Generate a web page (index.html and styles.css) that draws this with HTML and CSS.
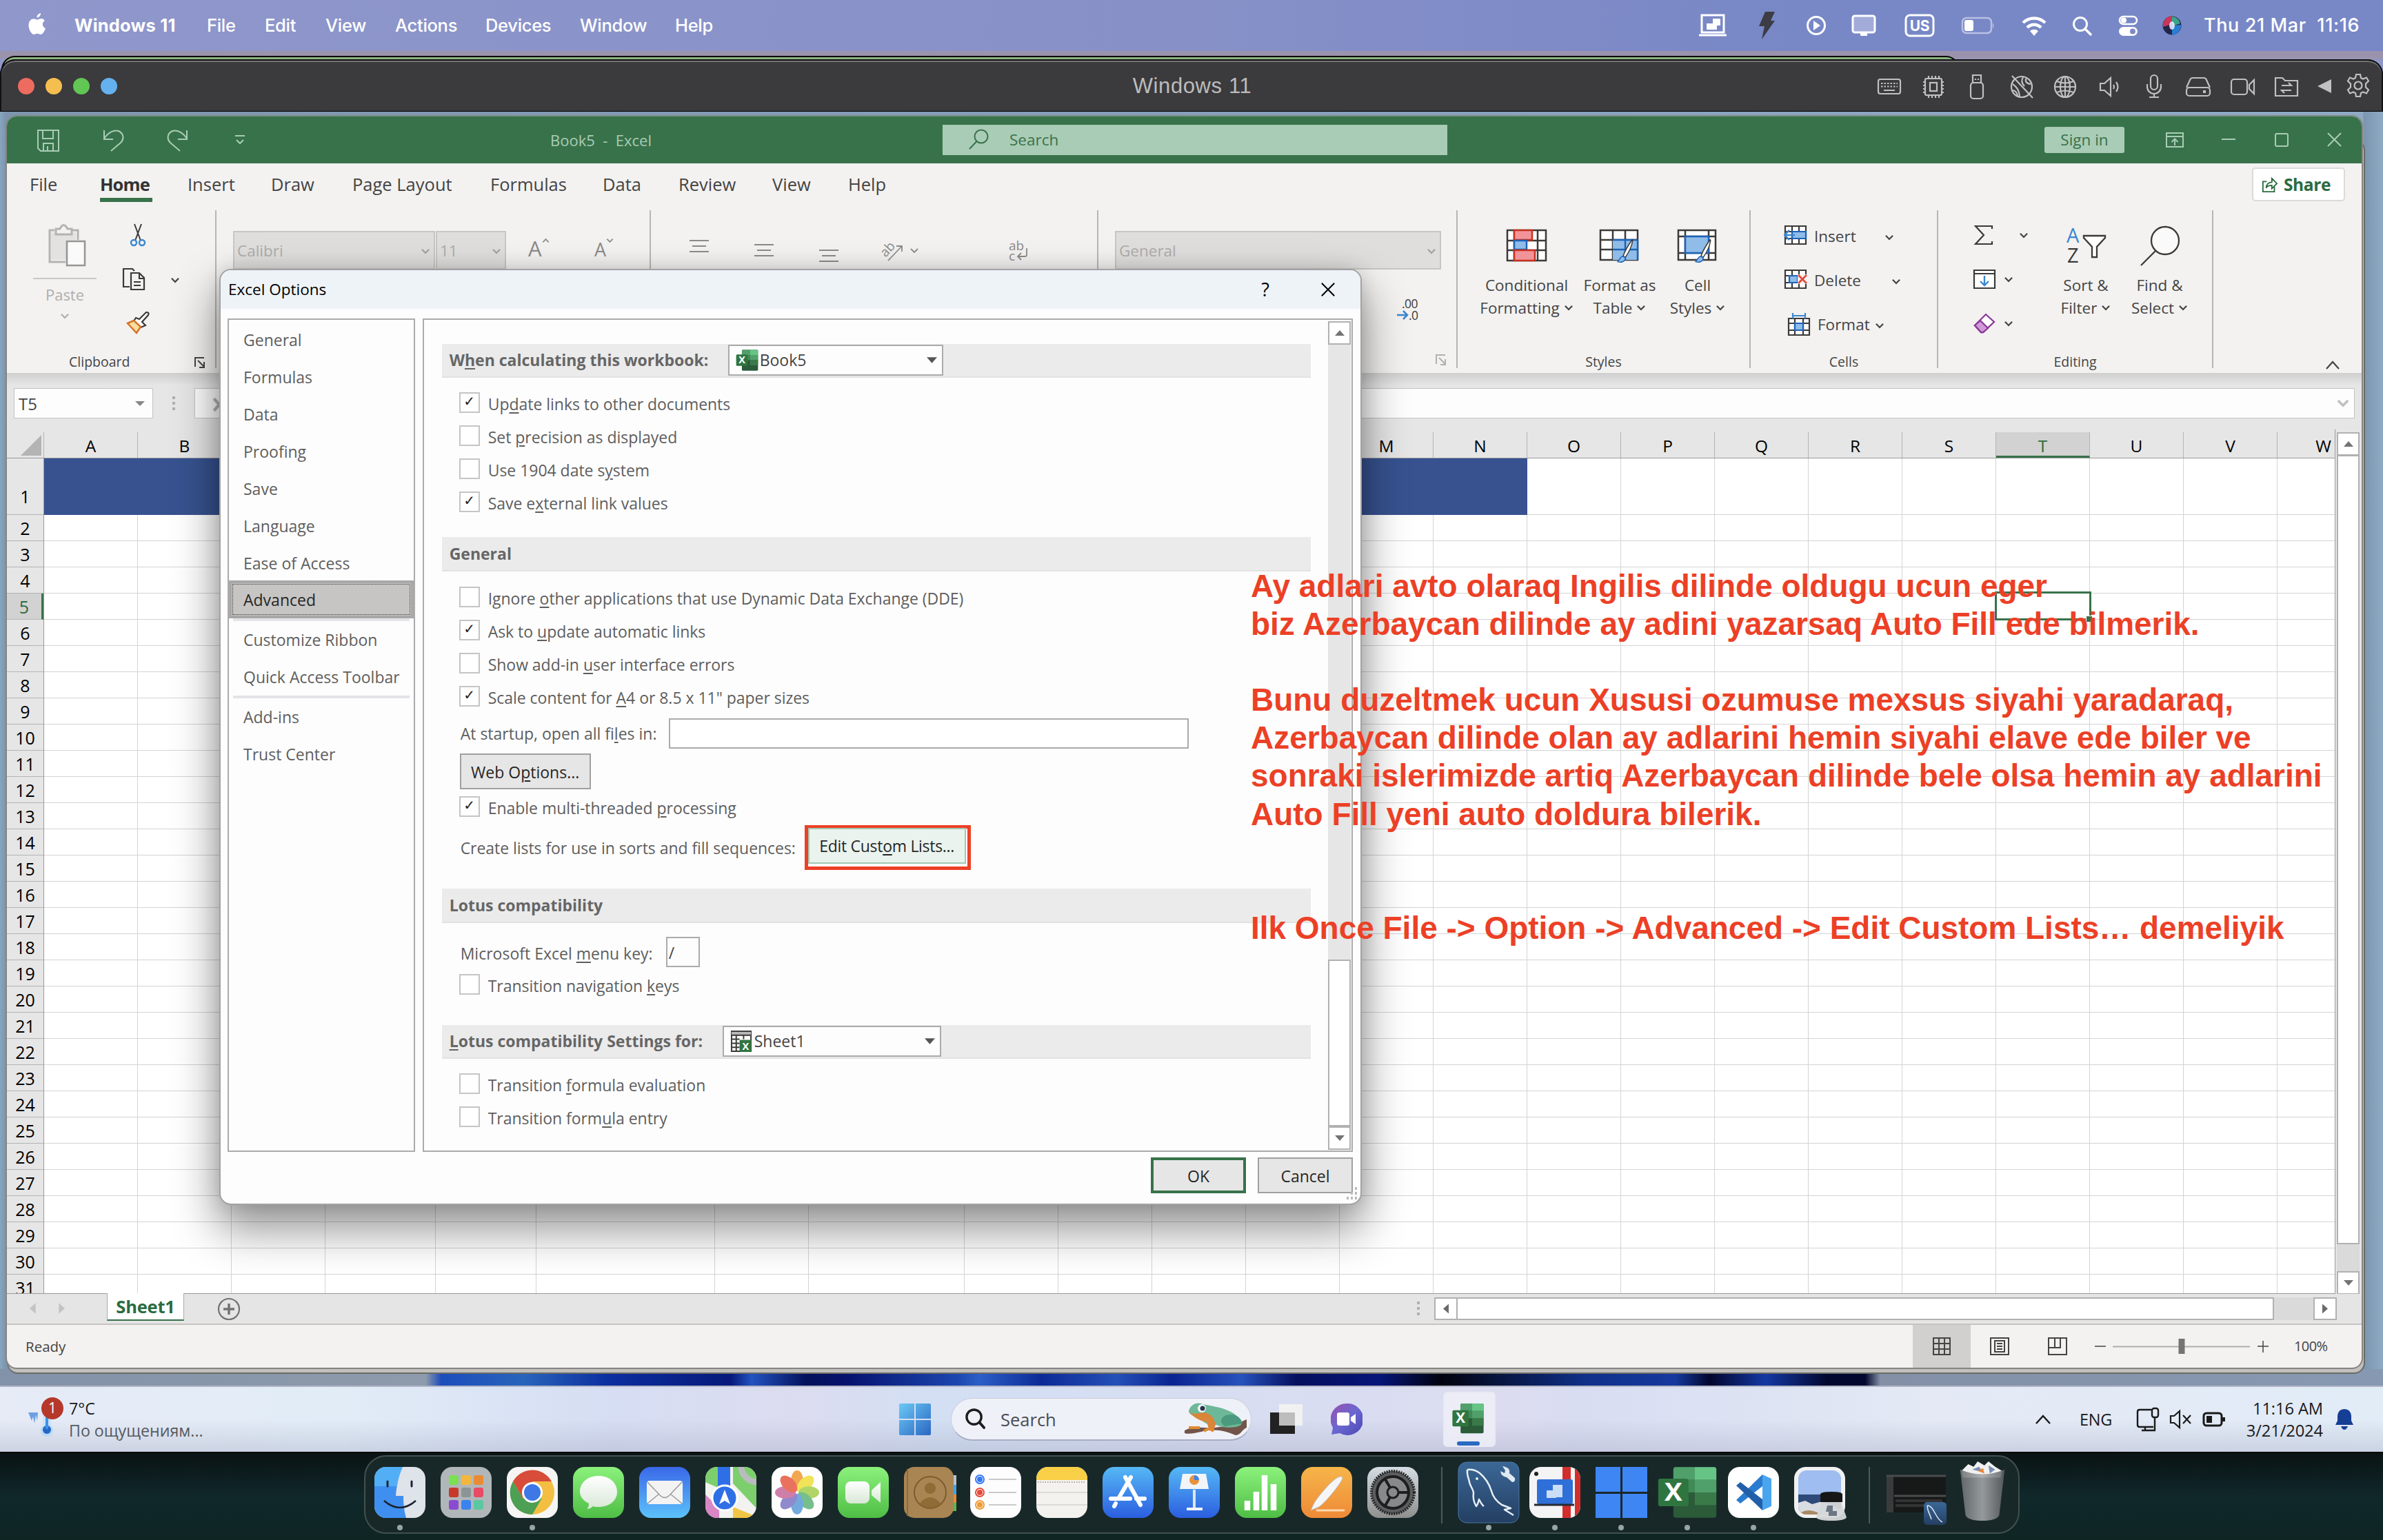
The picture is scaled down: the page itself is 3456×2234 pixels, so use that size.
FILE: index.html
```html
<!DOCTYPE html>
<html lang="en">
<head>
<meta charset="utf-8">
<title>Windows 11</title>
<link rel="stylesheet" href="styles.css">
</head>
<body>
<svg class="defs" aria-hidden="true">
  <defs>
    <symbol id="chev" viewBox="0 0 12 8"><path d="M1.5 1.5 6 6.2 10.500 1.500" fill="none" stroke="currentColor" stroke-width="2"/></symbol>
    <symbol id="excel" viewBox="0 0 48 48">
      <rect x="13" y="2" width="34" height="44" rx="2" fill="#2b5b39"/>
      <path d="M13 4a2 2 0 0 1 2-2h15v11H13z" fill="#50a06b"/><path d="M30 2h15a2 2 0 0 1 2 2v9H30z" fill="#67c487"/>
      <path d="M13 13h17v11H13z" fill="#3f8a57"/><path d="M30 13h17v11H30z" fill="#50a06b"/>
      <path d="M30 24h17v11H30z" fill="#3a7a49"/>
      <rect x="1" y="12" width="24" height="24" rx="2" fill="#2f7540"/>
      <text x="13" y="31" text-anchor="middle" class="logo-x">X</text>
    </symbol>
    <symbol id="brush" viewBox="0 0 40 70"><path d="M37 3C29 14 20 28 15 42l5 4C29 33 36 18 38 5z" fill="#fff" stroke="#3b3a39" stroke-width="2.500"/><path d="M14 43c-6 1-7 8-12 13 8 3 19 0 18-10z" fill="#8fbce8" stroke="#1e63b8" stroke-width="2.500"/></symbol>
    <linearGradient id="gGreen" x2="0" y2="1"><stop stop-color="#8bf27c"/><stop offset="1" stop-color="#4fbd45"/></linearGradient>
    <linearGradient id="gBlue" x2="0" y2="1"><stop stop-color="#3a68e8"/><stop offset="1" stop-color="#5cc2fb"/></linearGradient>
    <linearGradient id="gBlue2" x2="0" y2="1"><stop stop-color="#55b8f5"/><stop offset="1" stop-color="#2b5ee0"/></linearGradient>
    <linearGradient id="gOrange" x2="0" y2="1"><stop stop-color="#f6b54a"/><stop offset="1" stop-color="#ef8a37"/></linearGradient>
    <linearGradient id="gGray" x2="0" y2="1"><stop stop-color="#d5dde4"/><stop offset="1" stop-color="#8f8f8e"/></linearGradient>
    <linearGradient id="gWhite" x2="0" y2="1"><stop stop-color="#fff"/><stop offset="1" stop-color="#d8e8d6"/></linearGradient>
    <linearGradient id="gNavy" x2="0" y2="1"><stop stop-color="#3b6796"/><stop offset="1" stop-color="#243f63"/></linearGradient>
    <linearGradient id="gWin" x2="1" y2="1"><stop stop-color="#6cc8f5"/><stop offset="1" stop-color="#2a67c2"/></linearGradient>
    <linearGradient id="gChat" x2="1" y2="1"><stop stop-color="#9a4fb0"/><stop offset=".5" stop-color="#6a68d0"/><stop offset="1" stop-color="#4b46b4"/></linearGradient>
    <linearGradient id="gTrash"><stop stop-color="#6b6e70"/><stop offset=".5" stop-color="#a6a9ab"/><stop offset="1" stop-color="#5c5f61"/></linearGradient>
  </defs>
</svg>

<header class="menubar">
  <svg class="apple" viewBox="0 0 28 34"><path d="M19 1c.3 3-2.200 6.500-5.500 6.600C13.100 4.500 16 1.300 19 1zM24.800 12c-4.500 3-3.500 9.200 1.200 11-1.500 4.500-4.200 9-7 9-2 0-2.700-1.200-5-1.200S11 32 9.200 32C5.500 32 1.500 24.500 1.500 18.500c0-6 3.800-9.300 7.400-9.300 2.300 0 3.900 1.400 5.300 1.400 1.300 0 3.200-1.500 5.900-1.500 2 0 3.800 1.200 4.700 2.900z" fill="#fff"/></svg>
  <nav class="menus"><b>Windows 11</b><span>File</span><span>Edit</span><span>View</span><span>Actions</span><span>Devices</span><span>Window</span><span>Help</span></nav>
  <div class="status">
    <svg viewBox="0 0 44 44"><path d="M6 7h32v25H6zM2 36h40" fill="none" stroke="#fff" stroke-width="3"/><path d="M22 12h11v10h-5v6H13v-9h9z" fill="#fff"/></svg>
    <svg viewBox="0 0 44 44"><path d="M20 2h14l-6 13h6L15 42l4-19h-8z" fill="#3c3c44"/></svg>
    <svg viewBox="0 0 44 44"><circle cx="22" cy="22" r="12.500" fill="none" stroke="#fff" stroke-width="3"/><path d="M18 15l10 7-10 7z" fill="#fff"/></svg>
    <svg viewBox="0 0 44 44"><rect x="6" y="8" width="32" height="24" rx="3" fill="#a3abd8" stroke="#fff" stroke-width="3"/><path d="M17 33h10v4H17z" fill="#fff"/></svg>
    <svg viewBox="0 0 44 44"><rect x="2" y="7" width="40" height="30" rx="6" fill="none" stroke="#fff" stroke-width="3"/><text x="22" y="30" text-anchor="middle" class="us">US</text></svg>
    <svg viewBox="0 0 44 44"><rect x="-1" y="11" width="42" height="22" rx="6" fill="none" stroke="#b9c0e4" stroke-width="2.500"/><rect x="2" y="14" width="13" height="16" rx="3" fill="#fff"/><path d="M43 18v8q3-4 0-8" fill="#b9c0e4"/></svg>
    <svg viewBox="0 0 44 44"><path d="M6 18a23 23 0 0 1 32 0M12 25a14 14 0 0 1 20 0" fill="none" stroke="#fff" stroke-width="4.500"/><path d="M22 37l-6-7a9 9 0 0 1 12 0z" fill="#fff"/></svg>
    <svg viewBox="0 0 44 44"><circle cx="20" cy="20" r="9.500" fill="none" stroke="#fff" stroke-width="3"/><path d="M27 27l8 8" stroke="#fff" stroke-width="3.500" stroke-linecap="round"/></svg>
    <svg viewBox="0 0 44 44"><rect x="10" y="9" width="25" height="11" rx="5.500" fill="none" stroke="#fff" stroke-width="2.500"/><circle cx="16" cy="14.500" r="4" fill="#fff"/><rect x="9" y="24" width="27" height="13" rx="6.500" fill="#fff"/><circle cx="29" cy="30.500" r="4" fill="#7d8bc6"/></svg>
    <svg viewBox="0 0 44 44"><circle cx="22" cy="22" r="13.500" fill="#23264b"/><path d="M22 8a14 14 0 0 0-13 16l13-4z" fill="#c8365b"/><path d="M22 36a14 14 0 0 0 13-15l-13 1z" fill="#2b7dd1"/><path d="M22 9a13 13 0 0 1 12 10l-12 4z" fill="#39a58a"/><ellipse cx="22" cy="22" rx="4" ry="6" fill="#eef" opacity=".85"/></svg>
    <span class="clock">Thu 21 Mar&nbsp; 11:16</span>
  </div>
</header>

<div class="behind"></div>

<section class="vm">
  <div class="vm-title">
    <div class="lights"><i class="r"></i><i class="y"></i><i class="g"></i><i class="b"></i></div>
    <div class="vm-name">Windows 11</div>
    <div class="vm-icons">
      <svg viewBox="0 0 44 44"><rect x="6" y="11" width="32" height="21" rx="3"/><path d="M10 17h24M10 21.500h24" stroke-dasharray="2.500 2"/><path d="M14 27h16"/></svg>
      <svg viewBox="0 0 44 44"><rect x="10" y="10" width="24" height="24" rx="2"/><rect x="17" y="16" width="10" height="12"/><path d="M15 6v4M20 6v4M25 6v4M30 6v4M15 34v4M20 34v4M25 34v4M30 34v4M7 15h3M7 20h3M7 25h3M7 30h3M34 15h3M34 20h3M34 25h3M34 30h3"/></svg>
      <svg viewBox="0 0 44 44"><rect x="13" y="16" width="18" height="23" rx="4"/><path d="M16 16V5h12v11M20 10v2M24 10v2"/></svg>
      <svg viewBox="0 0 44 44"><circle cx="22" cy="22" r="15"/><path d="M8 6l30 32M24 8c-3 5-2 9 2 13M29 9c-3 5 0 8 6 9M9 18c5 4 9 7 10 18M8 27c4 0 7 2 8 8"/></svg>
      <svg viewBox="0 0 44 44"><circle cx="22" cy="22" r="15"/><ellipse cx="22" cy="22" rx="7" ry="15"/><path d="M22 7v30M7 22h30M10 14q12 5 24 0M10 30q12-5 24 0"/></svg>
      <svg viewBox="0 0 44 44"><path d="M8 17h6l9-8v26l-9-8H8zM31 15q5 7 0 14M27 19q2 3 0 6"/></svg>
      <svg viewBox="0 0 44 44"><rect x="17" y="5" width="10" height="21" rx="5"/><path d="M12 18v4a10 10 0 0 0 20 0v-4M22 32v5M15 37h14"/></svg>
      <svg viewBox="0 0 44 44"><path d="M5 23l5-11q1-3 4-3h16q3 0 4 3l5 11"/><rect x="5" y="23" width="34" height="12" rx="4"/><path d="M29 29h4" stroke-width="4"/></svg>
      <svg viewBox="0 0 44 44"><rect x="5" y="11" width="23" height="22" rx="4"/><path d="M31 19l7-7v20l-7-7z"/></svg>
      <svg viewBox="0 0 44 44"><path d="M6 35V9h10l4 4h18v22zM15 20h14l-4-4M29 27H15l4 4"/></svg>
      <svg viewBox="0 0 44 44"><path d="M12 21L32 11v20z" fill="#c0c0c1" stroke="none"/></svg>
      <svg viewBox="0 0 44 44"><circle cx="22" cy="20" r="5.500"/><path d="M19 4h6l1 5 3 1.500 5-2 3 5-4 4v5l4 4-3 5-5-2-3 1.500-1 5h-6l-1-5-3-1.500-5 2-3-5 4-4v-5l-4-4 3-5 5 2 3-1.500z"/></svg>
    </div>
  </div>

  <div class="desktop">
    <div class="ghost"></div>
    <main class="excel">
      <div class="x-title">
        <div class="qat">
          <svg viewBox="0 0 32 32"><path d="M1 1h30v30H5l-4-4zM8 1v12h15V1M9 31V20h14v11M15 24v7"/></svg>
          <svg viewBox="0 0 32 32"><path d="M3 1v13h13M3 13C9 4 17 0 24 2c8 4 8 12 3 17L13 31"/></svg>
          <svg viewBox="0 0 32 32"><path d="M29 1v13H16M29 13C23 4 15 0 8 2 0 6 0 14 5 19l14 12"/></svg>
          <svg viewBox="0 0 32 32"><path d="M9 9h14M11 15l5 5 5-5"/></svg>
        </div>
        <div class="x-name">Book5 &nbsp;- &nbsp;Excel</div>
        <div class="x-search"><svg viewBox="0 0 32 32"><circle cx="20" cy="11" r="9.500"/><path d="M13.500 18L3 29"/></svg>Search</div>
        <div class="signin">Sign in</div>
        <div class="x-ctl">
          <svg viewBox="0 0 32 32"><path d="M4 6h24v20H4zM4 11h24M16 24v-9M11.500 19l4.500-4.500 4.500 4.500"/></svg>
          <svg viewBox="0 0 32 32"><path d="M6 15h20"/></svg>
          <svg viewBox="0 0 32 32"><rect x="7" y="7" width="18" height="18" rx="2"/></svg>
          <svg viewBox="0 0 32 32"><path d="M6 6l19 19M25 6L6 25"/></svg>
        </div>
      </div>

      <div class="tabs"><span>File</span><b>Home</b><span>Insert</span><span>Draw</span><span>Page Layout</span><span>Formulas</span><span>Data</span><span>Review</span><span>View</span><span>Help</span>
        <div class="share"><svg viewBox="0 0 26 26"><path d="M8 8H2v16h18v-8M7 18c1-8 6-9 9-9V3l8 8-8 8v-5c-4 0-7 1-9 4z"/></svg>Share</div>
      </div>

      <div class="ribbon">
        <div class="grp clip">
          <div class="body">
            <div class="paste">
              <svg viewBox="0 0 56 62"><path d="M10 9H3v46h23M36 9h8v14" fill="none" stroke="#b5b3b1" stroke-width="3"/><path d="M5 12h36v11H27v29H5z" fill="#e3e2e1"/><path d="M12 15V7h6q5-11 11 0h6v8z" fill="#f3f2f1" stroke="#b5b3b1" stroke-width="3"/><rect x="28" y="25" width="26" height="35" fill="#fafafa" stroke="#979593" stroke-width="2.500"/></svg>
              <i></i><span>Paste</span><svg class="chev"><use href="#chev"/></svg>
            </div>
            <div class="clip-col">
              <div><svg viewBox="0 0 36 36"><path d="M13 2l9 24M23 2l-9 24" stroke="#3b3a39" stroke-width="2" fill="none"/><circle cx="12" cy="29" r="4" fill="none" stroke="#3b87cf" stroke-width="2.500"/><circle cx="24" cy="29" r="4" fill="none" stroke="#3b87cf" stroke-width="2.500"/></svg></div>
              <div><svg class="copy" viewBox="0 0 36 36"><path d="M12 29H3V3h13l3 3M14 9h12l7 7v17H14zM26 9v8h7M18 22h10M18 27h10" fill="none" stroke="#3b3a39" stroke-width="2.200"/></svg><svg class="chev"><use href="#chev"/></svg></div>
              <div><svg viewBox="0 0 36 36"><path d="M20 12L30 2q5 0 3 4l-9 10 5 5-7 3-10-9 3-5z" fill="#fff" stroke="#3b3a39" stroke-width="2.200"/><path d="M12 14L3 18l13 14 6-9z" fill="#fbdc9c" stroke="#d5742a" stroke-width="2.500"/></svg></div>
            </div>
          </div>
          <div class="label">Clipboard<svg class="launch" viewBox="0 0 18 18"><path d="M2 15V2h13M6 6l9 9M15 8v8H8"/></svg></div>
        </div>
        <div class="grp font">
          <div class="combo c1">Calibri<svg class="chev"><use href="#chev"/></svg></div>
          <div class="combo c2">11<svg class="chev"><use href="#chev"/></svg></div>
          <div class="big-a">A<svg class="mini up"><use href="#chev"/></svg></div>
          <div class="big-a sm">A<svg class="mini"><use href="#chev"/></svg></div>
        </div>
        <div class="grp align">
          <svg viewBox="0 0 44 60"><path d="M8 13h28M12 21h20M8 29h28"/></svg>
          <svg viewBox="0 0 44 60"><path d="M8 19h28M12 27h20M8 35h28"/></svg>
          <svg viewBox="0 0 44 60"><path d="M8 27h28M12 35h20M8 43h28"/></svg>
          <svg viewBox="0 0 64 60" class="ab"><text x="2" y="33" transform="rotate(-48 12 26)">ab</text><path d="M14 42L34 21M26 21h8v8M47 25l5 5 5-5"/></svg>
          <svg viewBox="0 0 44 60" class="ab wrap"><text x="8" y="27">ab</text><text x="8" y="42">c</text><path d="M34 24v10q0 2-3 2H21M26 31l-5 5 5 5"/></svg>
        </div>
        <div class="grp number">
          <div class="combo c3">General<svg class="chev"><use href="#chev"/></svg></div>
          <div class="dec"><svg viewBox="0 0 36 36"><text x="8" y="16">.00</text><text x="18" y="33">.0</text><path d="M1 26h15M10 20l6 6-6 6"/></svg></div>
          <div class="label"><svg class="launch off" viewBox="0 0 18 18"><path d="M2 15V2h13M6 6l9 9M15 8v8H8"/></svg></div>
        </div>
        <div class="grp styles">
          <div class="body">
            <div class="bigbtn w1"><svg viewBox="0 0 60 60"><path d="M2 7h56v44H2zM2 22h56M2 36h56M12 7v44M46 7v44" fill="#fff" stroke="#3b3a39" stroke-width="2.500"/><path d="M12 7h26v14H12z" fill="#f1949a" stroke="#c8321f" stroke-width="2.500"/><path d="M12 22h18v13H12z" fill="#8fbce8" stroke="#1e63b8" stroke-width="2.500"/><path d="M12 36h30v15H12z" fill="#f1949a" stroke="#c8321f" stroke-width="2.500"/></svg><span>Conditional</span><span>Formatting<svg class="chev"><use href="#chev"/></svg></span></div>
            <div class="bigbtn w2"><svg viewBox="0 0 60 60"><path d="M2 7h54v43H2zM2 21h54M2 35h54M20 7v43M38 7v43" fill="#fff" stroke="#3b3a39" stroke-width="2.500"/><path d="M20 21h36v29H20z" fill="#8fbce8"/><path d="M20 21h36M20 35h36M38 21v29M56 21v29" stroke="#1e63b8" stroke-width="2.500"/><use href="#brush" x="16" y="19" width="44" height="42"/></svg><span>Format as</span><span>Table<svg class="chev"><use href="#chev"/></svg></span></div>
            <div class="bigbtn w3"><svg viewBox="0 0 60 60"><path d="M2 7h54v43H2zM2 16h54M2 40h54M12 7v43M46 7v43" fill="#fff" stroke="#3b3a39" stroke-width="2.500"/><path d="M12 16h34v24H12z" fill="#8fbce8" stroke="#1e63b8" stroke-width="2.500"/><use href="#brush" x="16" y="19" width="44" height="42"/></svg><span>Cell</span><span>Styles<svg class="chev"><use href="#chev"/></svg></span></div>
          </div>
          <div class="label">Styles</div>
        </div>
        <div class="grp cells-g">
          <div class="body col">
            <div class="row-btn"><svg viewBox="0 0 34 30"><path d="M2 2h30v26H2zM2 10h30M2 20h30M12 2v26M22 2v26" fill="#fff" stroke="#3b3a39" stroke-width="2.200"/><path d="M12 10h20v10H12z" fill="#8fbce8" stroke="#1e63b8" stroke-width="2.200"/><path d="M0 15h16M8 8l-7 7 7 7" fill="none" stroke="#3b87cf" stroke-width="2.600"/></svg>Insert<svg class="chev far"><use href="#chev"/></svg></div>
            <div class="row-btn"><svg viewBox="0 0 34 30"><path d="M2 2h30v26H2zM2 10h30M2 20h30M12 2v26M22 2v26" fill="#fff" stroke="#3b3a39" stroke-width="2.200"/><path d="M8 10h12v10H8z" fill="#8fbce8" stroke="#1e63b8" stroke-width="2.200"/><path d="M20 8h14v14H20z" fill="#f3f2f1"/><path d="M21 9l12 12M33 9L21 21" stroke="#e0483a" stroke-width="2.600"/></svg>Delete<svg class="chev far"><use href="#chev"/></svg></div>
            <div class="row-btn fmt"><svg viewBox="0 0 34 34"><path d="M2 8h30v24H2zM2 15h30M2 25h30M11 8v24M23 8v24" fill="#fff" stroke="#3b3a39" stroke-width="2.200"/><path d="M11 15h12v10H11z" fill="#8fbce8" stroke="#1e63b8" stroke-width="2.200"/><path d="M8 4h18M8 0v8M26 0v8" stroke="#3b87cf" stroke-width="2.200"/></svg>Format<svg class="chev"><use href="#chev"/></svg></div>
          </div>
          <div class="label">Cells</div>
        </div>
        <div class="grp editing">
          <div class="body">
            <div class="ed-col">
              <div><svg viewBox="0 0 34 34"><path d="M28 8V4H4l12 13L4 30h24v-4" fill="none" stroke="#3b3a39" stroke-width="2.200"/></svg><svg class="chev far"><use href="#chev"/></svg></div>
              <div><svg viewBox="0 0 34 34"><path d="M2 4h30v26H2zM2 9h30" fill="#fff" stroke="#3b3a39" stroke-width="2.200"/><path d="M17 12v14M11 20l6 6 6-6" fill="none" stroke="#3b87cf" stroke-width="2.400"/></svg><svg class="chev"><use href="#chev"/></svg></div>
              <div><svg viewBox="0 0 34 34"><path d="M3 20L19 4l12 11-16 15h-3z" fill="#fff" stroke="#8d3a9c" stroke-width="2.300"/><path d="M3 20l8-7 11 11-7 6h-3z" fill="#d09ad8" stroke="#8d3a9c" stroke-width="2.300"/></svg><svg class="chev"><use href="#chev"/></svg></div>
            </div>
            <div class="bigbtn w4"><svg viewBox="0 0 60 60"><text x="2" y="25" class="az" fill="#3b87cf">A</text><text x="3" y="54" class="az" fill="#3b3a39">Z</text><path d="M27 15h31v3L46 31v15h-7V31L27 18z" fill="#fff" stroke="#3b3a39" stroke-width="2.300"/></svg><span>Sort &amp;</span><span>Filter<svg class="chev"><use href="#chev"/></svg></span></div>
            <div class="bigbtn w5"><svg viewBox="0 0 60 60"><circle cx="38" cy="22" r="20" fill="#fafafa" stroke="#3b3a39" stroke-width="2.300"/><path d="M24 37L3 58" stroke="#3b3a39" stroke-width="2.300"/></svg><span>Find &amp;</span><span>Select<svg class="chev"><use href="#chev"/></svg></span></div>
          </div>
          <div class="label">Editing</div>
        </div>
        <div class="collapse"><svg viewBox="0 0 24 16"><path d="M3 13l9-10 9 10"/></svg></div>
      </div>

      <div class="fbar">
        <div class="namebox">T5<svg viewBox="0 0 14 8"><path d="M0 0h14L7 7z" fill="#858688"/></svg></div>
        <div class="dots"><i></i><i></i><i></i></div>
        <div class="fx"><svg viewBox="0 0 20 20"><path d="M3 2l14 16M17 2L3 18" stroke="#b4b4b4" stroke-width="4"/></svg></div>
        <div class="finput"><svg viewBox="0 0 20 14"><path d="M2 2l8 8 8-8" fill="none" stroke="#c0c0c0" stroke-width="4"/></svg></div>
      </div>

      <div class="sheet">
        <div class="grid">
          <div class="heads"><div class="corner"><svg viewBox="0 0 30 30"><path d="M30 0v30H0z" fill="#b4b4b4"/></svg></div><div class="w136">A</div><div class="w136">B</div><div class="w136">C</div><div class="wd">D</div><div class="we">E</div><div class="wf">F</div><div class="w136">G</div><div class="wh">H</div><div class="w136">I</div><div class="w136">J</div><div class="w136">K</div><div class="w136">L</div><div class="w136">M</div><div class="w136">N</div><div class="w136">O</div><div class="w136">P</div><div class="w136">Q</div><div class="w136">R</div><div class="w136">S</div><div class="w136 sel">T</div><div class="w136">U</div><div class="w136">V</div><div class="ww">W</div></div>
          <div class="rows">
            <div class="nums"><div class="first">1</div><div>2</div><div>3</div><div>4</div><div class="sel">5</div><div>6</div><div>7</div><div>8</div><div>9</div><div>10</div><div>11</div><div>12</div><div>13</div><div>14</div><div>15</div><div>16</div><div>17</div><div>18</div><div>19</div><div>20</div><div>21</div><div>22</div><div>23</div><div>24</div><div>25</div><div>26</div><div>27</div><div>28</div><div>29</div><div>30</div><div>31</div></div>
            <div class="cells">
              <div class="row1"><div class="fill"></div><div class="w136"></div><div class="w136"></div><div class="w136"></div><div class="w136"></div><div class="w136"></div><div class="w136"></div><div class="w136"></div><div class="w136"></div></div>
              <div class="rest"><div class="w136"></div><div class="w136"></div><div class="w136"></div><div class="wd"></div><div class="we"></div><div class="wf"></div><div class="w136"></div><div class="wh"></div><div class="w136"></div><div class="w136"></div><div class="w136"></div><div class="w136"></div><div class="w136"></div><div class="w136"></div><div class="w136"></div><div class="w136"></div><div class="w136"></div><div class="w136"></div><div class="w136"></div><div class="w136"></div><div class="w136"></div><div class="w136"></div></div>
              <div class="cursor"><i></i></div>
            </div>
          </div>
        </div>
        <div class="vscroll"><div class="btn"><svg viewBox="0 0 16 9"><path d="M0 9h16L8 0z" fill="#737373"/></svg></div><div class="thumb"></div><div class="gap"></div><div class="btn"><svg viewBox="0 0 16 9"><path d="M0 0h16L8 9z" fill="#737373"/></svg></div></div>
      </div>

      <div class="sheetbar">
        <svg class="nav" viewBox="0 0 54 16"><path d="M9 0v16L0 8zM44 0v16l9-8z" fill="#c3c3c3"/></svg>
        <div class="sheettab">Sheet1</div>
        <svg class="plus" viewBox="0 0 34 34"><circle cx="17" cy="17" r="15" fill="none" stroke="#737373" stroke-width="2.200"/><path d="M17 9v16M9 17h16" stroke="#737373" stroke-width="3.500"/></svg>
        <div class="dots hd"><i></i><i></i><i></i></div>
        <div class="hscroll"><div class="hb"><svg viewBox="0 0 9 16"><path d="M9 0v16L0 8z" fill="#6a6a6a"/></svg></div><div class="ht"></div><div class="hg"></div><div class="hb"><svg viewBox="0 0 9 16"><path d="M0 0v16l9-8z" fill="#6a6a6a"/></svg></div></div>
      </div>

      <div class="statusbar"><span>Ready</span>
        <div class="views">
          <div class="on"><svg viewBox="0 0 28 28"><path d="M2 2h24v24H2zM2 10h24M2 18h24M10 2v24M18 2v24"/></svg></div>
          <div><svg viewBox="0 0 28 28"><path d="M1 2h26v24H1zM7 6h14v16H7zM10 10h8M10 14h8M10 18h8"/></svg></div>
          <div><svg viewBox="0 0 28 28"><path d="M1 2h26v24H1zM1 16h17V2M10 2v14"/></svg></div>
        </div>
        <svg class="zoom" viewBox="0 0 256 30"><path d="M2 15h16M246 7v17M238 15h16" stroke="#444" stroke-width="1.500"/><path d="M28 15.500h199" stroke="#b0aeac" stroke-width="2"/><path d="M128 4v22" stroke="#767472" stroke-width="9"/></svg>
        <span class="pct">100%</span>
      </div>
    </main>

    <div class="taskbar">
      <div class="weather">
        <svg viewBox="0 0 54 60"><path d="M0 22h14l-1 12-2-8-2 12-2-10-2 6z" fill="#6f9fe2"/><rect x="21" y="18" width="12" height="36" rx="6" fill="#cfe2f7"/><circle cx="27" cy="48" r="9" fill="#b9dbf7"/><circle cx="27" cy="47" r="6" fill="#2567c4"/><path d="M27 24v22" stroke="#3a93e6" stroke-width="4"/><circle cx="35" cy="16" r="16" fill="#b5382a"/><text x="35" y="23" text-anchor="middle" class="badge">1</text></svg>
        <div><p>7°C</p><p class="dim">По ощущениям...</p></div>
      </div>
      <div class="tb-mid">
        <svg class="start" viewBox="0 0 46 46"><path d="M0 2q0-2 2-2h20v22H0zM24 0h20q2 0 2 2v20H24zM0 24h22v22H2q-2 0-2-2zM24 24h22v20q0 2-2 2H24z" fill="url(#gWin)"/></svg>
        <div class="pill"><svg class="mag" viewBox="0 0 32 32"><circle cx="14" cy="13" r="11" fill="none" stroke="#1d1d1f" stroke-width="3.500"/><path d="M22 21l7 8" stroke="#1d1d1f" stroke-width="4" stroke-linecap="round"/></svg>Search
          <svg class="frog" viewBox="0 0 96 48"><path d="M2 40c14-8 30-2 44-4s26-2 46-12v12c-8 4-8 10-16 11-16-7-32-10-50-5-10 2-18 4-24 2z" fill="#71544a"/><path d="M8 12C10 3 20-2 28 2c10 2 24 4 34 8 16 6 22 14 22 22-10 6-28 4-36 0-12 2-20-4-26-12-8 0-14-4-14-8z" fill="#6db898"/><path d="M9 13c6 5 12 2 22 1 12 3 14 10 16 17l-3 10-6-1-4-12C24 26 14 21 9 13z" fill="#d9853a"/><path d="M62 18c14-4 22 4 24 12l-26 4c-8-6-6-12 2-16z" fill="#4b9a80"/><circle cx="27" cy="8" r="6" fill="#f4f6f5"/><circle cx="28" cy="8" r="3.500" fill="#27344e"/><path d="M8 36h16M30 41l8-4 6 4" stroke="#e08a34" stroke-width="4" fill="none"/></svg>
        </div>
        <svg class="tv" viewBox="0 0 48 46"><rect x="0" y="13" width="36" height="31" fill="#222"/><rect x="13" y="1" width="34" height="31" fill="#f1f1f1"/><path d="M13 13h23v19H13z" fill="#bdbdbd"/></svg>
        <svg class="chat" viewBox="0 0 46 46"><path d="M23 0a23 23 0 1 1-10 43L1 45l2-10A23 23 0 0 1 23 0z" fill="url(#gChat)"/><rect x="9" y="13" width="18" height="19" rx="3" fill="#fff"/><path d="M29 20l7-5v15l-7-5z" fill="#fff"/></svg>
        <div class="tb-app"><svg viewBox="0 0 48 48"><use href="#excel"/></svg><i></i></div>
      </div>
      <div class="tray">
        <svg viewBox="0 0 44 44"><path d="M12 28l10-11 10 11" fill="none" stroke="#1a1a1a" stroke-width="2.500"/></svg>
        <span>ENG</span>
        <svg viewBox="0 0 44 44"><path d="M27 8H10q-3 0-3 3v19q0 3 3 3h20M18 33v5M13 38h20M32 20v18" fill="none" stroke="#1a1a1a" stroke-width="2.400"/><rect x="28" y="6" width="9" height="13" rx="3" fill="none" stroke="#1a1a1a" stroke-width="2.400"/></svg>
        <svg viewBox="0 0 44 44"><path d="M8 17h5l8-7v24l-8-7H8zM26 16l11 12M37 16L26 28" fill="none" stroke="#1a1a1a" stroke-width="2.200"/></svg>
        <svg viewBox="0 0 44 44"><rect x="7" y="13" width="26" height="18" rx="4" fill="none" stroke="#1a1a1a" stroke-width="3"/><rect x="11" y="17" width="8" height="10" fill="#1a1a1a"/><path d="M36 19v6" stroke="#1a1a1a" stroke-width="4"/></svg>
        <div class="time"><p>11:16 AM</p><p>3/21/2024</p></div>
        <svg class="bell" viewBox="0 0 28 30"><path d="M14 0q9 0 10 10v7l3 6H1l3-6v-7Q5 0 14 0zM9 25h10q-2 5-5 5t-5-5z" fill="#153f94"/></svg>
      </div>
    </div>

    <section class="dialog">
      <div class="d-title"><span>Excel Options</span><b>?</b><svg viewBox="0 0 24 24"><path d="M2 2l20 20M22 2L2 22" stroke="#000" stroke-width="2.200"/></svg></div>
      <div class="d-main">
        <ul class="d-nav"><li>General</li><li>Formulas</li><li>Data</li><li>Proofing</li><li>Save</li><li>Language</li><li>Ease of Access</li><li class="on">Advanced</li><li class="rule"></li><li>Customize Ribbon</li><li>Quick Access Toolbar</li><li class="rule"></li><li>Add-ins</li><li>Trust Center</li></ul>
        <div class="d-pane">
          <div class="d-body">
            <h3 class="calc">W<u>h</u>en calculating this workbook:<span class="drop"><svg class="ic" viewBox="0 0 48 48"><use href="#excel"/></svg>Book5<svg class="tri" viewBox="0 0 16 9"><path d="M0 0h16L8 9z"/></svg></span></h3>
            <div class="opts a">
              <label class="ck on">Up<u>d</u>ate links to other documents</label>
              <label class="ck">Set <u>p</u>recision as displayed</label>
              <label class="ck">Use 1904 date s<u>y</u>stem</label>
              <label class="ck on">Save e<u>x</u>ternal link values</label>
            </div>
            <h3 class="gen">General</h3>
            <div class="opts b">
              <label class="ck">Ignore <u>o</u>ther applications that use Dynamic Data Exchange (DDE)</label>
              <label class="ck on">Ask to <u>u</u>pdate automatic links</label>
              <label class="ck">Show add-in <u>u</u>ser interface errors</label>
              <label class="ck on">Scale content for <u>A</u>4 or 8.5 x 11" paper sizes</label>
            </div>
            <div class="line startup">At startup, open all fi<u>l</u>es in:<i></i></div>
            <div class="web"><span class="pbtn">Web O<u>p</u>tions...</span></div>
            <label class="ck on thr">Enable multi-threaded <u>p</u>rocessing</label>
            <div class="line create">Create lists for use in sorts and fill sequences:<div class="redbox"><span>Edit Cust<u>o</u>m Lists...</span></div></div>
            <h3 class="lotus">Lotus compatibility</h3>
            <div class="line key">Microsoft Excel <u>m</u>enu key:<i>/</i></div>
            <label class="ck tnk">Transition navigation <u>k</u>eys</label>
            <h3 class="lset"><u>L</u>otus compatibility Settings for:<span class="drop"><svg class="ic" viewBox="0 0 34 34"><path d="M2 2h29v30H2z" fill="#fff" stroke="#3b3a39" stroke-width="2"/><path d="M2 3h29v5H2z" fill="#b8b8b8"/><path d="M2 8h29M2 14h12M2 20h12M2 26h12M9 8v24M20 8v6" stroke="#3b3a39" stroke-width="2"/><rect x="14" y="15" width="18" height="18" rx="1.500" fill="#2f7540"/><text x="23" y="30" text-anchor="middle" class="sx">X</text></svg>Sheet1<svg class="tri" viewBox="0 0 16 9"><path d="M0 0h16L8 9z"/></svg></span></h3>
            <div class="opts c">
              <label class="ck">Transition <u>f</u>ormula evaluation</label>
              <label class="ck">Transition form<u>u</u>la entry</label>
            </div>
          </div>
          <div class="d-scroll"><div class="btn"><svg viewBox="0 0 16 9"><path d="M0 9h16L8 0z" fill="#737373"/></svg></div><div class="gap"></div><div class="thumb"></div><div class="btn"><svg viewBox="0 0 16 9"><path d="M0 0h16L8 9z" fill="#737373"/></svg></div></div>
        </div>
      </div>
      <div class="d-foot"><span class="ok">OK</span><span class="cancel">Cancel</span></div>
      <svg class="grip" viewBox="0 0 16 18"><path d="M12 0h3v4h-3zM12 7h3v4h-3zM6 7h3v4H6zM12 14h3v4h-3zM6 14h3v4H6zM0 14h3v4H0z" fill="#bbb"/></svg>
    </section>
  </div>
</section>

<div class="note">
  <p>Ay adlari avto olaraq Ingilis dilinde oldugu ucun eger</p>
  <p>biz Azerbaycan dilinde ay adini yazarsaq Auto Fill ede bilmerik.</p>
  <p>&nbsp;</p>
  <p>Bunu duzeltmek ucun Xususi ozumuse mexsus siyahi yaradaraq,</p>
  <p>Azerbaycan dilinde olan ay adlarini hemin siyahi elave ede biler ve</p>
  <p>sonraki islerimizde artiq Azerbaycan dilinde bele olsa hemin ay adlarini</p>
  <p>Auto Fill yeni auto doldura bilerik.</p>
  <p>&nbsp;</p>
  <p>&nbsp;</p>
  <p>Ilk Once File -&gt; Option -&gt; Advanced -&gt; Edit Custom Lists… demeliyik</p>
</div>

<footer class="dockwrap">
  <div class="dock">
    <div class="app run"><svg viewBox="0 0 74 74"><rect width="74" height="74" rx="17" fill="#dfe3ea"/><path d="M17 0h24c-6 12-9 28-10 42h11c0 12 1 22 4 32H17A17 17 0 0 1 0 57V17A17 17 0 0 1 17 0z" fill="#3f8ff0"/><path d="M17 0h24c-4 9-7 19-8 28H0V17A17 17 0 0 1 17 0z" fill="#5bbcf6" opacity=".7"/><path d="M19 21v7M54 21v7" stroke="#1c2333" stroke-width="3" stroke-linecap="round"/><path d="M14 49q23 20 46 0" fill="none" stroke="#1c2333" stroke-width="2.500"/></svg></div>
    <div class="app"><svg viewBox="0 0 74 74"><rect width="74" height="74" rx="17" fill="#b1b7b9"/><g><rect x="12" y="12" width="14" height="14" rx="3" fill="#7be052"/><rect x="30" y="12" width="14" height="14" rx="3" fill="#f2b73c"/><rect x="48" y="12" width="14" height="14" rx="3" fill="#e98b34"/><rect x="12" y="30" width="14" height="14" rx="3" fill="#c8392b"/><rect x="30" y="30" width="14" height="14" rx="3" fill="#8d9496"/><rect x="48" y="30" width="14" height="14" rx="3" fill="#e84b63"/><rect x="12" y="48" width="14" height="14" rx="3" fill="#8b4bd0"/><rect x="30" y="48" width="14" height="14" rx="3" fill="#3b82ee"/><rect x="48" y="48" width="14" height="14" rx="3" fill="#5cc7a0"/></g></svg></div>
    <div class="app run"><svg viewBox="0 0 74 74"><rect width="74" height="74" rx="17" fill="#f5f5f4"/><circle cx="37" cy="37" r="32" fill="#f3bf42"/><path d="M9 21a32 32 0 0 1 56 0H37L23 45z" fill="#d84c3a"/><path d="M9 21a32 32 0 0 0 28 48l14-24H23z" fill="#4d9f54"/><circle cx="37" cy="37" r="15" fill="#fff"/><circle cx="37" cy="37" r="12" fill="#3d78e6"/></svg></div>
    <div class="app"><svg viewBox="0 0 74 74"><rect width="74" height="74" rx="17" fill="url(#gGreen)"/><path d="M37 13c16 0 27 10 27 23S53 58 37 58c-3 0-6 0-8-1-3 3-7 4-9 4 3-3 3-6 3-8-8-4-13-10-13-17 0-13 11-23 27-23z" fill="url(#gWhite)"/></svg></div>
    <div class="app"><svg viewBox="0 0 74 74"><rect width="74" height="74" rx="17" fill="url(#gBlue)"/><rect x="11" y="20" width="52" height="34" rx="4" fill="#f3f3f3"/><path d="M12 22l19 20q6 5 12 0l19-20M12 53l17-14M62 53L45 39" fill="none" stroke="#9a9a9a" stroke-width="1.500"/></svg></div>
    <div class="app"><svg viewBox="0 0 74 74"><clipPath id="mp"><rect width="74" height="74" rx="17"/></clipPath><g clip-path="url(#mp)"><path d="M0 0h74v74H0z" fill="#f2f2f0"/><path d="M0 0h18v30L0 22zM40 0h34v60L40 24z" fill="#7ccf6c"/><path d="M0 40l20 20v14H0z" fill="#d886c5"/><path d="M40 74V58l34 14v2z" fill="#f1c644"/><path d="M18 0h18v46H18z" fill="#2f6fe6"/><path d="M52-4a24 24 0 0 0 26 26" fill="none" stroke="#b9bcbf" stroke-width="9"/></g><circle cx="28" cy="45" r="18" fill="#2f6fe6" stroke="#fff" stroke-width="3"/><path d="M28 33l8 21-8-5-8 5z" fill="#fff"/></svg></div>
    <div class="app"><svg viewBox="0 0 74 74"><rect width="74" height="74" rx="17" fill="#fdfdfd"/><g opacity=".85"><ellipse cx="37" cy="20" rx="9" ry="15" fill="#f19a35"/><ellipse cx="37" cy="20" rx="9" ry="15" fill="#f0df3c" transform="rotate(45 37 37)"/><ellipse cx="37" cy="20" rx="9" ry="15" fill="#a4cf4c" transform="rotate(90 37 37)"/><ellipse cx="37" cy="20" rx="9" ry="15" fill="#5fb57a" transform="rotate(135 37 37)"/><ellipse cx="37" cy="20" rx="9" ry="15" fill="#5b9bd8" transform="rotate(180 37 37)"/><ellipse cx="37" cy="20" rx="9" ry="15" fill="#7b76c4" transform="rotate(225 37 37)"/><ellipse cx="37" cy="20" rx="9" ry="15" fill="#c7689c" transform="rotate(270 37 37)"/><ellipse cx="37" cy="20" rx="9" ry="15" fill="#e65a43" transform="rotate(315 37 37)"/></g></svg></div>
    <div class="app"><svg viewBox="0 0 74 74"><rect width="74" height="74" rx="17" fill="url(#gGreen)"/><rect x="11" y="21" width="35" height="32" rx="8" fill="url(#gWhite)"/><path d="M49 34l13-12v30L49 41z" fill="url(#gWhite)"/></svg></div>
    <div class="app"><svg viewBox="0 0 74 74"><path d="M68 12h8v14h-8z" fill="#b9c3c9"/><path d="M68 26h8v14h-8z" fill="#4aa3df"/><path d="M68 40h8v12h-8z" fill="#e88a3a"/><path d="M68 52h8v12h-8z" fill="#62b44c"/><rect width="72" height="74" rx="15" fill="#a98553"/><path d="M5 3v68" stroke="#8d6b3e" stroke-width="2"/><circle cx="38" cy="37" r="23" fill="none" stroke="#7d5c30" stroke-width="2"/><circle cx="38" cy="31" r="8" fill="#86652f" opacity=".8"/><path d="M22 54q16-20 32 0-16 14-32 0z" fill="#86652f" opacity=".8"/></svg></div>
    <div class="app"><svg viewBox="0 0 74 74"><rect width="74" height="74" rx="17" fill="#fdfdfd"/><path d="M27 18h40M27 37h40M27 55h40" stroke="#c9c9c9" stroke-width="2"/><g stroke-width="2" fill="none"><circle cx="14" cy="18" r="6" stroke="#3478f6"/><circle cx="14" cy="37" r="6" stroke="#e5493a"/><circle cx="14" cy="55" r="6" stroke="#ee9a35"/></g><circle cx="14" cy="18" r="4" fill="#3478f6"/><circle cx="14" cy="37" r="4" fill="#e5493a"/><circle cx="14" cy="55" r="4" fill="#ee9a35"/></svg></div>
    <div class="app"><svg viewBox="0 0 74 74"><rect width="74" height="74" rx="17" fill="#f4f2ee"/><path d="M17 0h40a17 17 0 0 1 17 17v2H0v-2A17 17 0 0 1 17 0z" fill="#f8cf47"/><path d="M0 37h74M0 55h74" stroke="#d5d3cf" stroke-width="1.500"/><path d="M2 22h70" stroke="#aaa" stroke-width="2" stroke-dasharray="1.500 2"/></svg></div>
    <div class="app"><svg viewBox="0 0 74 74"><rect width="74" height="74" rx="17" fill="url(#gBlue2)"/><path d="M41 15L23 46M33 15l22 40M12 46h28M49 46h12M19 53l-2 4" stroke="#fff" stroke-width="6" stroke-linecap="round"/></svg></div>
    <div class="app"><svg viewBox="0 0 74 74"><rect width="74" height="74" rx="17" fill="url(#gBlue2)"/><path d="M20 10h34l4 22H16z" fill="#f2f5f8"/><circle cx="37" cy="19" r="7" fill="#e8923b"/><path d="M37 12a7 7 0 0 1 7 7h-7z" fill="#3b82ee"/><path d="M37 33v27" stroke="#dfe6ee" stroke-width="4"/><path d="M26 61h23" stroke="#f2f5f8" stroke-width="4"/></svg></div>
    <div class="app"><svg viewBox="0 0 74 74"><rect width="74" height="74" rx="17" fill="url(#gGreen)"/><path d="M18 49v14M31 36v27M43 12v51M56 25v38" stroke="#fff" stroke-width="8.500"/></svg></div>
    <div class="app"><svg viewBox="0 0 74 74"><rect width="74" height="74" rx="17" fill="url(#gOrange)"/><path d="M54 15q5-3 6 1c0 5-22 33-34 42l-12 5 4-9c8-14 30-38 36-39z" fill="#f6f6f6" stroke="#b9b9b9"/><path d="M22 63h41" stroke="#fbd9ae" stroke-width="3"/></svg></div>
    <div class="app"><svg viewBox="0 0 74 74"><rect width="74" height="74" rx="17" fill="url(#gGray)"/><circle cx="37" cy="37" r="31" fill="#5c5d5f" stroke="#222" stroke-width="4" stroke-dasharray="2 1.500"/><circle cx="37" cy="37" r="23" fill="#88898b" stroke="#1e1e1e" stroke-width="4"/><path d="M37 37h22M37 37L26 18M37 37L26 56" stroke="#1e1e1e" stroke-width="4"/><circle cx="37" cy="37" r="8" fill="#88898b" stroke="#1e1e1e" stroke-width="3"/></svg></div>
    <i class="sep s1"></i>
    <div class="app run big"><svg viewBox="0 0 88 88"><rect width="88" height="88" rx="12" fill="url(#gNavy)" stroke="#4a77a6"/><path d="M13 11q10-1 18 5 12 10 17 26c2 8 6 14 15 20l13 5-9 2 13 8M13 11c-1 8 2 12 3 18s5 9 6 15c-1 8 0 14 4 20 2-2 3-6 4-10 2 4 4 8 7 10" fill="none" stroke="#e6eef6" stroke-width="2.500" stroke-linejoin="round"/><circle cx="27" cy="24" r="2" fill="#e6eef6"/><path d="M64 6l4 6-1 4-6-3q1 8 9 9l8 7q5 0 4-6l-8-7q2-8-10-10z" fill="#dfe9f2"/></svg></div>
    <div class="app run"><svg viewBox="0 0 74 74"><clipPath id="pr"><rect width="74" height="74" rx="17"/></clipPath><g clip-path="url(#pr)"><path d="M0 0h74v74H0z" fill="#f4f4f4"/><path d="M48 0h12v74H48zM66 0h8v74h-8z" fill="#d22f2c"/></g><rect x="11" y="18" width="52" height="36" rx="3" fill="#2f6fd8"/><path d="M34 26h14v18H34zM25 34h14v11H25z" fill="#e8f1fb" opacity=".85"/><path d="M7 55h58" stroke="#262a33" stroke-width="3"/><circle cx="10" cy="10" r="3" fill="#222"/></svg></div>
    <div class="app run"><svg viewBox="0 0 74 74"><path d="M0 0h36v36H0zM39 0h36v36H39zM0 39h36v35H0zM39 39h36v35H39z" fill="#3f86f5"/></svg></div>
    <div class="app run xl"><svg viewBox="0 0 48 48" preserveAspectRatio="none"><use href="#excel"/></svg></div>
    <div class="app run"><svg viewBox="0 0 74 74"><rect width="74" height="74" rx="17" fill="#fff"/><path d="M50 11L12 48l6 5 32-25z" fill="#2b7bd0"/><path d="M50 63L12 27l6-5 32 25z" fill="#235fa8"/><path d="M50 11l13 6v40l-13 6z" fill="#4aa5ef"/></svg></div>
    <div class="app"><svg viewBox="0 0 74 74"><clipPath id="pv"><rect x="6" y="5" width="62" height="64" rx="12"/></clipPath><rect width="74" height="74" rx="17" fill="#f1f1f1"/><g clip-path="url(#pv)"><path d="M6 5h62v35H6z" fill="#9fbdf0"/><path d="M6 40h62v30H6z" fill="#2e4a78"/><path d="M6 52l10-3 10 5 14-4 28 12v8H6z" fill="#d9dde2"/><path d="M10 66q10-6 24 0v4H10z" fill="#a98a62"/></g><path d="M38 40q0-4 16-4t16 4v11H38z" fill="#161616"/><path d="M40 51h28l8 22q-2 5-22 5t-22-5z" fill="#d5d7d9" opacity=".95"/><path d="M48 56h8v8h6v7H50v-6h-4z" fill="#6c7684"/></svg></div>
    <i class="sep s2"></i>
    <div class="app thumbwin"><svg viewBox="0 0 88 88"><rect x="1" y="16" width="86" height="54" fill="#171818"/><rect x="1" y="16" width="10" height="54" fill="#3a3b3c"/><path d="M1 17h86M12 46h75" stroke="#4a4b4c" stroke-width="3"/><path d="M14 53h68M14 60h50" stroke="#333" stroke-width="4"/><rect x="55" y="55" width="33" height="33" rx="5" fill="url(#gNavy)"/><path d="M60 60c10 0 12 20 22 24M60 60c0 8 4 12 6 20" fill="none" stroke="#dfe9f2" stroke-width="1.500"/></svg></div>
    <div class="app trash"><svg viewBox="0 0 70 88"><path d="M4 14L14 4l8 4L28 0l10 6 6-6 10 8 10 6-2 10H6z" fill="#f1f1f1"/><path d="M20 12l10-4 6 8zM44 6l10 6-8 6z" fill="#7a8fb8"/><path d="M28 14l8-4 2 8z" fill="#e6893c"/><path d="M2 12q33 14 66 0l-8 68q-4 8-25 8t-25-8z" fill="url(#gTrash)" opacity=".88"/></svg></div>
  </div>
</footer>
</body>
</html>
```
FILE: styles.css
```css
* { box-sizing: border-box; }
body {
  margin: 0; width: 3456px; height: 2234px; overflow: hidden; position: relative;
  display: flex; flex-direction: column;
  font: 23px/32px "Open Sans", "Noto Sans", sans-serif; color: #444;
  background: linear-gradient(180deg, #8f97cb 0, #9b93ab 82px, #8f97cb 90px, #0a1213 2104px, #0f2426 2160px, #0e2323 2234px);
}
p, ul, h3 { margin: 0; padding: 0; font: inherit; }
.defs { position: absolute; width: 0; height: 0; }
.chev { width: 14px; height: 9px; color: #444; }
u { text-underline-offset: 3px; text-decoration-thickness: 1.5px; }
.logo-x { font: 700 21px "Open Sans", sans-serif; fill: #fff; }
.sx { font: 700 15px "Open Sans", sans-serif; fill: #fff; }
.us { font: 700 21px Inter, sans-serif; fill: #fff; }
.badge { font: 21px "Open Sans", sans-serif; fill: #fff; }

/* macOS menu bar */
.menubar {
  height: 74px; flex: none; display: flex; align-items: center; color: #fff;
  font: 500 25.5px/74px Inter, sans-serif; letter-spacing: -.3px;
  background: linear-gradient(90deg, #8f97cb, #8791c8 50%, #7887c6 75%, #7888c7);
}
.apple { width: 28px; height: 34px; margin: 0 0 4px 40px; }
.menus { display: grid; margin-left: 41px; grid-template-columns: 191px 84px 88px 101px 131px 137px 138px 90px; }
.menus b { font-weight: 700; letter-spacing: .2px; margin-left: -1px; }
.status { display: grid; align-items: center; margin-left: auto; width: 994px; grid-template-columns: 78px 72px 69px 81px 85px 81px 69px 67px 64px 70px 1fr; }
.status svg { width: 44px; height: 44px; overflow: visible; }
.status .clock { white-space: nowrap; margin-left: -2px; font-size: 27px; letter-spacing: .6px; }

/* edge of the window lying underneath */
.behind { position: absolute; left: 2px; top: 81px; width: 2840px; height: 40px; border-radius: 20px 20px 0 0; background: #8fb583; border: 2px solid #0a0a0a; }

/* virtual machine window */
.vm { position: relative; margin-top: 12px; height: 2020px; flex: none; border-radius: 22px 22px 0 0; overflow: hidden; background: #000; }
.vm-title {
  height: 76px; display: flex; align-items: center; position: relative; border: 2px solid #111; border-bottom: 1px solid #000; border-radius: 22px 22px 0 0;
  background: #3b3a3c; box-shadow: inset 0 2px 0 #747476;
}
.lights { display: flex; gap: 16px; margin-left: 24px; width: 400px; }
.lights i { width: 24px; height: 24px; border-radius: 50%; }
.lights .r { background: #ed6b5f; } .lights .y { background: #f5bf4f; } .lights .g { background: #61c654; } .lights .b { background: #65b1f0; }
.vm-name { flex: 1; text-align: center; font: 400 31px/40px "Liberation Sans", sans-serif; letter-spacing: .6px; color: #bcbcbd; margin-right: -314px; }
.vm-icons { display: grid; width: 736px; grid-template-columns: 64px 63px 65px 63px 65px 64px 64px 65px 63px 55px 49px 44px; margin: 3px 0 0 auto; }
.vm-icons svg { width: 44px; height: 44px; fill: none; stroke: #c0c0c1; stroke-width: 2.2; overflow: visible; }

.desktop {
  position: relative; height: 1944px; padding: 5px 30px 0 8px; overflow: hidden;
  background: linear-gradient(90deg, #87a6bf, #7d95ae 8px, #8fa9c4 3427px, #7b95ad 3428px, #8eabc6 3456px);
}
.desktop::before {
  content: ""; position: absolute; left: 0; right: 0; top: 1824px; height: 26px;
  background:
    linear-gradient(90deg, #8292a8 0, #8e9bac 617px, #1d4dbb 640px, #2964bb 760px, #0c2f9f 880px, #07197a 1060px, #2253c0 1090px, #04105a 1170px, #06136f 1230px, #1c47b0 1390px, #2c5fc8 1420px, #0c2a96 1510px, #2450b8 1620px, #0a2490 1700px, #2752bd 1800px, #050f5e 1880px, #061679 2000px, #01020e 2090px, #103089 2300px, #15399e 2430px, #02052c 2480px, #1439a3 2560px, #02072f 2650px, #02072f 2705px, #8390a6 2727px, #8799b2 3456px);
}
.ghost { position: absolute; left: 10px; top: 40px; width: 3420px; height: 1791px; border-radius: 16px; background: #c1c0bd; border: 2px solid #6b6b66; border-left-color: #777; }

/* Excel window */
.excel { position: relative; height: 1819px; width: 3419px; border: 2px solid #858482; border-top-color: #7d8c86; border-radius: 16px; overflow: hidden; background: #f3f2f1; display: flex; flex-direction: column; }
.x-title { height: 68px; flex: none; background: #38724a; color: #a9ccb6; display: flex; align-items: center; font-size: 22px; }
.qat { display: grid; grid-template-columns: 94px 94px 90px 32px; margin: 2px 0 0 44px; width: 310px; }
.x-title svg { width: 32px; height: 32px; fill: none; stroke: #a9ccb6; stroke-width: 2; }
.x-name { margin-left: 434px; width: 569px; white-space: pre; font-size: 22px; }
.x-search { width: 732px; height: 44px; background: #a9ccb6; color: #38724a; display: flex; align-items: center; font-size: 22.500px; }
.x-search svg { stroke: #38724a; margin: 0 29px 0 36px; }
.signin { margin-left: 866px; width: 116px; height: 38px; line-height: 38px; border-radius: 3px; background: #a9ccb6; color: #38724a; text-align: center; font-size: 22.500px; }
.x-ctl { display: grid; grid-template-columns: 78px 77px 77px 32px; margin-left: 57px; }

.tabs { height: 62px; flex: none; display: flex; position: relative; font-size: 25.5px; line-height: 60px; padding-left: 33px; white-space: nowrap; }
.tabs > span:nth-child(1) { width: 102px; } .tabs > b { width: 76px; margin-right: 51px; font-weight: 700; letter-spacing: -.9px; height: 56px; border-bottom: 6px solid #38724a; color: #333; }
.tabs > span:nth-child(3) { width: 121px; } .tabs > span:nth-child(4) { width: 118px; } .tabs > span:nth-child(5) { width: 200px; }
.tabs > span:nth-child(6) { width: 163px; } .tabs > span:nth-child(7) { width: 110px; } .tabs > span:nth-child(8) { width: 136px; } .tabs > span:nth-child(9) { width: 110px; } .tabs > span:nth-child(10) { width: 100px; }
.share { margin: 6px 24px 0 auto; width: 135px; height: 49px; line-height: 45px; border: 2px solid #dcdad8; border-radius: 5px; background: #fff; color: #2b6b40; font-weight: 700; font-size: 24.500px; display: flex; align-items: center; gap: 8px; padding-left: 12px; letter-spacing: -.4px; }
.share svg { width: 24px; height: 24px; fill: none; stroke: #2b6b40; stroke-width: 2; }

.ribbon { height: 242px; flex: none; display: flex; padding-top: 6px; }
.grp { height: 229px; border-right: 2px solid #b8b6b4; display: flex; flex-direction: column; position: relative; }
.grp .body { display: flex; height: 207px; flex: none; }
.grp .label { height: 26px; flex: none; line-height: 26px; font-size: 19.5px; display: flex; justify-content: center; }
.launch { width: 18px; height: 18px; fill: none; stroke: #444; stroke-width: 2; }
.launch.off { stroke: #b0b0b0; }
.clip { width: 304px; }
.clip .label { justify-content: flex-start; padding-left: 90px; }
.clip .launch { margin: 5px 0 0 93px; }
.paste { width: 92px; margin: 20px 0 0 38px; display: flex; flex-direction: column; align-items: center; color: #b0aeac; font-size: 22px; }
.paste > svg:first-child { width: 56px; height: 62px; margin-left: 6px; }
.paste i { width: 92px; height: 2px; background: #c9c7c5; margin: 16px 0 6px; }
.paste .chev { color: #b0aeac; margin-top: 11px; }
.clip-col { margin-left: 36px; padding-top: 18px; }
.clip-col div { height: 64px; display: flex; align-items: flex-start; padding-left: 6px; }
.clip-col div svg:first-child { width: 36px; height: 36px; }
.clip-col .copy { margin-left: -6px; }
.clip-col .chev { margin: 15px 0 0 35px; }
.font { width: 630px; flex-direction: row; padding: 30px 0 0 24px; }
.combo { height: 56px; border: 2px solid #c8c6c4; background: #dfdedd; color: #aeacaa; font-size: 22.500px; line-height: 54px; display: flex; justify-content: space-between; align-items: center; padding: 2px 5px 0 4px; }
.combo .chev { color: #a3a1a0; }
.c1 { width: 293px; } .c2 { width: 102px; margin-left: 1px; }
.big-a { margin-left: 32px; width: 58px; font-size: 31px; line-height: 50px; color: #8d8b8a; display: flex; align-items: flex-start; }
.big-a.sm { margin-left: 38px; font-size: 27px; line-height: 54px; }
.mini { width: 11px; height: 8px; margin-top: 10px; }
.mini.up { transform: scaleY(-1); }
.align { width: 649px; flex-direction: row; padding: 31px 0 0 48px; }
.align svg { width: 44px; height: 60px; fill: none; stroke: #8d8b8a; stroke-width: 2; margin-right: 50px; overflow: visible; }
.align svg.ab { width: 64px; margin-right: 117px; margin-left: 0; stroke-width: 1.8; }
.align svg.ab.wrap { width: 44px; margin: 0; }
.align text { font: 19px "Open Sans", sans-serif; fill: #8d8b8a; stroke: none; }
.number { width: 521px; padding: 30px 0 0 24px; }
.number .combo { width: 473px; flex: none; }
.dec { padding: 40px 0 0 408px; }
.dec svg { width: 36px; height: 36px; overflow: visible; }
.dec text { font: 17.500px "Open Sans", sans-serif; letter-spacing: -.5px; fill: #3b3a39; }
.dec path { fill: none; stroke: #3b87cf; stroke-width: 2.5; }
.number .label { margin-top: auto; justify-content: flex-end; padding: 5px 13px 0 0; }
.styles { width: 425px; }
.bigbtn { display: flex; flex-direction: column; align-items: center; padding-top: 22px; white-space: nowrap; font-size: 22.500px; line-height: 33px; }
.bigbtn > svg { width: 60px; height: 60px; margin-bottom: 10px; }
.bigbtn .chev { margin: 0 0 4px 6px; }
.w1 { width: 142px; margin-left: 29px; } .w2 { width: 120px; margin-left: 4px; } .w3 { width: 90px; margin-left: 8px; }
.cells-g { width: 272px; }
.col { flex-direction: column; padding: 14px 0 0 48px; }
.row-btn { height: 64px; padding-top: 6px; display: flex; align-items: flex-start; line-height: 36px; font-size: 22.500px; }
.row-btn > svg:first-child { width: 34px; height: 30px; margin: 1px 10px 0 0; }
.row-btn .chev { margin: 15px 0 0 7px; }
.row-btn .chev.far { margin-left: 41px; }
.row-btn + .row-btn .chev.far { margin-left: 44px; }
.row-btn.fmt { margin-left: 5px; } .row-btn.fmt > svg:first-child { height: 34px; }
.editing { width: 399px; }
.ed-col { width: 150px; padding: 19px 0 0 50px; }
.ed-col div { height: 64px; white-space: nowrap; display: flex; align-items: flex-start; }
.ed-col svg:first-child { width: 34px; height: 34px; flex: none; }
.ed-col .chev { margin: 13px 0 0 11px; flex: none; } .ed-col .far { margin-left: 33px; }
.az { font: 29px "Open Sans", sans-serif; }
.w4 { width: 90px; margin-left: 19px; } .w5 { width: 100px; margin-left: 12px; }
.collapse { margin: 208px 0 0 161px; }
.collapse svg { width: 24px; height: 16px; fill: none; stroke: #444; stroke-width: 2.2; }

.fbar { height: 82px; flex: none; display: flex; padding: 22px 0 0 10px; background: linear-gradient(#cfcfcf, #e6e6e6 18px); }
.namebox, .fx, .finput { height: 44px; border: 1px solid #c3c3c3; background: #fdfdfd; }
.namebox { width: 202px; display: flex; align-items: center; justify-content: space-between; padding: 2px 11px 0 6px; font-size: 24px; }
.namebox svg { width: 14px; height: 8px; }
.dots { display: flex; flex-direction: column; gap: 4px; margin: 12px 0 0 28px; }
.dots i { width: 4px; height: 4px; background: #b0b0b0; }
.fx { width: 220px; margin-left: 28px; padding: 9px 0 0 24px; } .fx svg { width: 22px; height: 22px; }
.finput { flex: 1; margin: 0 10px 0 4px; display: flex; justify-content: flex-end; padding: 15px 7px 0 0; } .finput svg { width: 18px; height: 13px; }

.sheet { height: 1254px; flex: none; display: flex; background: #e6e6e6; }
.grid { width: 3377px; height: 1254px; border-right: 1px solid #999; border-bottom: 1px solid #999; overflow: hidden; background: #fff; }
.heads { display: flex; height: 42px; border-bottom: 1px solid #999; background: #e6e6e6; }
.heads > div { flex: none; text-align: center; color: #000; font-size: 24.500px; border-right: 1px solid #b4b4b4; margin-top: 4px; height: 37px; line-height: 39px; }
.heads .corner { width: 54px; padding: 4px 3px 3px 20px; display: flex; }
.corner svg { width: 30px; height: 30px; }
.heads .sel { background: #d2d2d2; color: #2b6b40; border-bottom: 3px solid #38724a; }
.w136 { width: 136px; } .wd { width: 160px; } .we { width: 146px; } .wf { width: 259px; } .wh { width: 226px; } .ww { width: 134px; }
.rows { display: flex; height: 1212px; }
.nums { width: 54px; flex: none; background: #e6e6e6; border-right: 1px solid #999; text-align: center; color: #000; font-size: 25px; }
.nums div { height: 38px; border-bottom: 1px solid #b4b4b4; line-height: 39px; }
.nums .first { height: 82px; line-height: 110px; }
.nums .sel { background: #d2d2d2; color: #2b6b40; border-right: 3px solid #38724a; }
.cells { position: relative; flex: none; width: 3323px; }
.row1 { display: flex; height: 82px; border-bottom: 1px solid #d4d4d4; }
.fill { width: 2151px; height: 82px; background: #37528f; }
.row1 > .w136, .rest > div { flex: none; border-right: 1px solid #d4d4d4; }
.rest { display: flex; height: 1130px; background: repeating-linear-gradient(#fff 0 37px, #d4d4d4 37px 38px); }
.cursor { position: absolute; left: 2829px; top: 193px; width: 140px; height: 42px; border: 3px solid #38724a; }
.cursor i { position: absolute; right: -4px; bottom: -5px; width: 9px; height: 9px; background: #38724a; border: 1px solid #fff; border-width: 1px 0 0 1px; }

.vscroll, .d-scroll { display: flex; flex-direction: column; }
.vscroll { margin: 4px 0 0 2px; width: 33px; height: 1251px; background: #dadada; }
.vscroll .btn, .d-scroll .btn { height: 34px; border: 2px solid #b1b1b1; background: #fff; display: flex; align-items: center; justify-content: center; }
.vscroll .btn svg, .d-scroll .btn svg { width: 14px; height: 8px; }
.vscroll .thumb { height: 1144px; background: #fff; border: 2px solid #b1b1b1; border-top-width: 1px; }
.vscroll .gap { flex: 1; }

.sheetbar { height: 45px; flex: none; display: flex; background: #e5e5e5; border-bottom: 2px solid #c6c4c2; }
.nav { width: 52px; height: 16px; margin: 13px 0 0 33px; }
.sheettab { width: 112px; height: 40px; margin: -1px 0 0 60px; background: #fff; border: 1px solid #aaa; border-width: 0 1px; border-bottom: 2px solid #38724a; color: #2b6b40; font-weight: 700; font-size: 25.500px; letter-spacing: -.2px; line-height: 38px; text-align: center; }
.plus { width: 34px; height: 34px; margin: 5px 0 0 48px; }
.hd { margin: 11px 0 0 1706px; }
.hscroll { display: flex; width: 1309px; height: 33px; margin: 5px 0 0 21px; background: #dadada; }
.hb { width: 34px; border: 2px solid #b1b1b1; background: #fff; display: flex; align-items: center; justify-content: center; } .hb svg { width: 8px; height: 15px; }
.ht { width: 1186px; margin-left: -2px; border: 2px solid #b1b1b1; background: #fff; } .hg { flex: 1; }

.statusbar { flex: 1; display: flex; align-items: center; font-size: 20.500px; padding-left: 27px; }
.views { display: flex; margin-left: auto; height: 100%; }
.views div { width: 84px; display: flex; align-items: center; justify-content: center; } .views .on { background: #d1d0ce; }
.views svg { width: 28px; height: 28px; fill: none; stroke: #444; stroke-width: 2; }
.zoom { width: 256px; height: 30px; margin-left: 10px; }
.pct { width: 98px; margin-left: 35px; font-size: 20px; letter-spacing: -.6px; }

/* Windows taskbar */
.taskbar { position: absolute; left: 0; right: 0; top: 1848px; height: 96px; border-top: 2px solid #b3b6c6; display: flex; align-items: center; color: #1a1a1a; font-size: 23.200px; background: linear-gradient(180deg, rgba(160,165,190,0) 50%, rgba(160,165,190,.35)), linear-gradient(90deg, #e6ebf6, #e1ecf7 500px, #d6def3 880px, #dcdcf0 1150px, #d3dff3 1350px, #dcdcf0 2200px, #d8ddf2 2300px, #e4e9f5 2800px, #e1ecf7 3456px); }
.weather { display: flex; width: 1304px; }
.weather svg { width: 54px; height: 60px; margin: 0 0 4px 41px; overflow: visible; } .weather div { margin-left: 5px; }
.weather .dim { color: #555a60; white-space: nowrap; }
.tb-mid { display: flex; align-items: center; }
.start { width: 46px; height: 46px; }
.pill { width: 436px; height: 62px; margin-left: 29px; border-radius: 31px; background: #eff1f8; border: 1px solid #c9cddd; border-bottom: 2px solid #a8adc4; display: flex; align-items: center; font-size: 25.500px; color: #4b4d52; padding-left: 19px; }
.mag { width: 31px; height: 31px; margin-right: 21px; }
.frog { width: 96px; height: 48px; margin: 0 2px 0 auto; }
.tv { width: 48px; height: 46px; margin-left: 27px; } .chat { width: 46px; height: 46px; margin-left: 40px; }
.tb-app { width: 76px; height: 80px; margin-left: 117px; border: 2px solid #e8eaf4; border-radius: 6px; background: rgba(240,241,249,.8); display: flex; flex-direction: column; align-items: center; padding: 13px 4px 0 0; }
.tb-app svg { width: 48px; height: 48px; } .tb-app i { width: 33px; height: 6px; border-radius: 3px; background: #2a6ac2; margin-top: 10px; }
.tray { display: grid; align-items: center; margin-left: auto; width: 515px; grid-template-columns: 75px 77px 47px 49px 38px 142px 1fr; }
.tray svg { width: 44px; height: 44px; } .tray span { font-size: 23.500px; letter-spacing: -.2px; }
.time { text-align: right; font-size: 23.700px; letter-spacing: -.1px; white-space: nowrap; } .tray .bell { width: 28px; height: 34px; margin-left: 17px; }

/* Excel options dialog */
.dialog { position: absolute; left: 318px; top: 228px; width: 1657px; height: 1358px; background: #fdfdfd; border: 2px solid #a3a3a3; border-radius: 17px; box-shadow: 0 32px 64px 4px rgba(0,0,0,.42), 0 0 26px rgba(0,0,0,.12); color: #5e5e5e; }
.d-title { height: 56px; background: #eef3f8; border-radius: 15px 15px 0 0; display: flex; align-items: center; color: #000; padding: 0 36px 0 11px; font-size: 22.500px; }
.d-title b { margin-left: auto; margin-right: 74px; font: 400 27px/32px "Open Sans", sans-serif; } .d-title svg { width: 22px; height: 22px; }
.d-main { display: flex; gap: 11px; padding: 14px 11px 0 10px; }
.d-nav { width: 272px; height: 1209px; border: 2px solid #ababab; list-style: none; padding-top: 2px; }
.d-nav li { height: 54px; line-height: 54px; padding-left: 21px; white-space: nowrap; }
.d-nav li.on { height: 55px; line-height: 48px; border: 4px solid #a8a8a8; background: #c6c5c3; outline: 1px dotted #333; outline-offset: -6px; color: #262626; padding-left: 17px; margin: -2px 0 0; }
.d-nav .rule { height: 4px; background: #e4e4e8; margin: 0 6px; padding: 0; }
.d-pane { width: 1351px; height: 1209px; border: 2px solid #ababab; display: flex; justify-content: space-between; }
.d-body { padding: 35px 0 0 26px; width: 1286px; }
.d-body h3 { height: 49px; display: flex; align-items: center; line-height: 47px; padding-left: 11px; background: #ebebeb; border-bottom: 2px solid #e2e2e4; font-weight: 700; color: #666; font-size: 23px; letter-spacing: 0; white-space: pre; }
.drop { height: 45px; border: 2px solid #ababab; background: #fdfdfd; font-weight: 400; display: flex; align-items: center; font-size: 23px; color: #444; padding: 0 7px 0 9px; margin-bottom: 1px; }
.calc .drop { width: 312px; margin-left: auto; margin-right: 533px; } .lset .drop { width: 317px; margin-left: auto; margin-right: 536px; }
.ic { width: 33px; height: 33px; margin-right: 2px; } .tri { width: 15px; height: 9px; margin-left: auto; fill: #555; }
.ck { display: flex; align-items: center; height: 48px; white-space: pre; letter-spacing: -.03px; }
.ck::before { content: ""; width: 26px; height: 26px; border: 2px solid #c6c4c4; background: #fff; margin: 0 12px 4px 25px; flex: none; letter-spacing: 0; }
.ck.on::before { content: "✓"; font: 700 20px/22px "DejaVu Sans", sans-serif; color: #222; text-align: center; }
.opts.a { margin-top: 14px; height: 217px; }
.d-body .gen { height: 50px; }
.opts.b { margin-top: 15px; }
.line { display: flex; align-items: center; padding-left: 27px; white-space: pre; }
.startup { height: 56px; } .startup i { width: 754px; height: 44px; border: 2px solid #ababab; background: #fff; margin-left: auto; margin-right: 177px; }
.web { padding: 1px 0 0 26px; height: 54px; display: flex; }
.pbtn { width: 190px; height: 52px; line-height: 50px; border: 2px solid #a0a0a0; background: #e6e6e6; color: #262626; text-align: center; }
.thr { margin-top: 2px; }
.create { height: 65px; margin-top: 1px; letter-spacing: -.05px; } .redbox { width: 241px; height: 65px; border: 5px solid #ec4026; margin-left: auto; margin-right: 493px; background: #fff; }
.redbox span { display: block; height: 52px; line-height: 48px; margin: -1px 2px 0 0; border: 2px solid #a3c9b3; background: #eaf3ed; color: #262626; text-align: center; letter-spacing: -.3px; }
.d-body .lotus { margin-top: 27px; height: 50px; }
.key { height: 66px; margin-top: 11px; } .key i { width: 49px; height: 44px; border: 2px solid #ababab; margin-left: auto; margin-right: 886px; font-style: normal; line-height: 42px; padding-left: 2px; color: #444; margin-top: -4px; }
.tnk { margin-top: -10px; }
.d-body .lset { margin-top: 33px; }
.opts.c { margin-top: 14px; }
.d-scroll { width: 33px; margin: 2px 1px 1px 0; background: #e6e6e6; }
.d-scroll .gap { height: 892px; flex: none; } .d-scroll .thumb { flex: 1; border: 2px solid #b1b1b1; background: #fff; }
.d-foot { display: flex; justify-content: flex-end; gap: 17px; padding: 8px 11px 0 0; color: #262626; text-align: center; }
.d-foot span { width: 138px; height: 52px; background: #e6e6e6; border: 2px solid #a0a0a0; line-height: 50px; }
.d-foot .ok { border: 4px solid #38724a; line-height: 46px; }
.grip { position: absolute; right: 4px; bottom: 6px; width: 16px; height: 18px; }

/* annotation drawn over the windows */
.note { position: absolute; left: 1814px; top: 823px; color: #ec4026; font: 700 45.960px/55.1px "Liberation Sans", sans-serif; white-space: nowrap; }

/* Dock */
.dockwrap { flex: 1; display: flex; padding: 4px 0 0 528px; background: linear-gradient(180deg, #0a1213, #10282b 50%, #0f2524); border-top: 1px solid #000; }
.dock { width: 2401px; height: 114px; border: 2px solid #41504f; border-radius: 32px; background: #182829; display: flex; align-items: flex-start; padding: 15px 0 0 2px; }
.app { width: 96px; height: 92px; flex: none; display: flex; flex-direction: column; align-items: center; justify-content: space-between; }
.app svg { width: 74px; height: 74px; overflow: visible; }
.app.run::after { content: ""; width: 8px; height: 8px; border-radius: 50%; background: #98a5a4; }
.big svg { width: 88px; height: 88px; margin: -7px 0 -7px; }
.xl svg { width: 88px; height: 80px; margin: -3px 0; }
.sep { width: 2px; height: 82px; background: #4b5a59; }
.s1 { margin: 0 19px 0 22px; } .s2 { margin: 0 19px 0 23px; }
.thumbwin svg { width: 88px; height: 88px; margin-top: -4px; }
.trash svg { width: 70px; height: 86px; margin-top: -8px; }
```
